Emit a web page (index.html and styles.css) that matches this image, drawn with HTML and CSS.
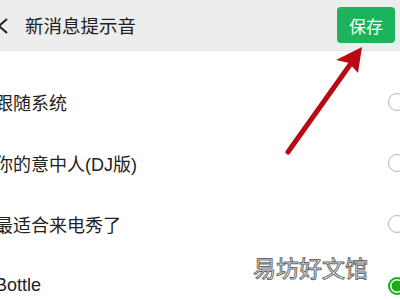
FILE: index.html
```html
<!DOCTYPE html>
<html lang="zh">
<head>
<meta charset="utf-8">
<link rel="stylesheet" href="styles.css">
</head>
<body>
<div class="page">
  <header class="bar">
    <svg class="back" width="12" height="16" viewBox="0 0 12 16"><path d="M10 1 L2 8 L10 15" fill="none" stroke="#222" stroke-width="2"/></svg>
    <span class="title">新消息提示音</span>
    <button class="save">保存</button>
  </header>
  <ul class="list">
    <li class="row"><span class="name">跟随系统</span><span class="radio"></span></li>
    <li class="row"><span class="name">你的意中人(DJ版)</span><span class="radio"></span></li>
    <li class="row"><span class="name">最适合来电秀了</span><span class="radio"></span></li>
    <li class="row"><span class="name">Bottle</span><span class="radio on"></span></li>
  </ul>
  <svg class="arrow" width="400" height="300" viewBox="0 0 400 300">
    <line x1="288" y1="152" x2="352" y2="62" stroke="#b70a12" stroke-width="5" stroke-linecap="round"/>
    <polygon points="362,47 336,60 349,63 358,73" fill="#b70a12"/>
  </svg>
  <div class="mark">易坊好文馆</div>
</div>
</body>
</html>
```
FILE: styles.css
```css
* { box-sizing: border-box; }
html, body { margin: 0; padding: 0; background: #fff; }
.page {
  position: relative;
  width: 400px;
  height: 300px;
  overflow: hidden;
  font-family: "Liberation Sans", "Noto Sans CJK SC", sans-serif;
  color: #222;
}
.bar {
  display: flex;
  align-items: center;
  height: 51px;
  background: #ededed;
  border-bottom: 1px solid #e3e3e3;
}
.back { margin-left: -3px; margin-top: 2px; }
.title {
  margin-left: 16px;
  font-size: 18.5px;
  color: #222;
}
.save {
  margin-left: auto;
  margin-right: 5px;
  width: 58px;
  height: 36px;
  border: none;
  border-radius: 4px;
  background: #1bb35b;
  color: #fff;
  font-family: "Liberation Sans", "Noto Sans CJK SC", sans-serif;
  font-size: 17px;
  padding: 0;
}
.list {
  list-style: none;
  margin: 0;
  padding: 20px 0 0;
}
.row {
  display: flex;
  align-items: center;
  justify-content: space-between;
  height: 61.3px;
}
.name {
  margin-left: -5px;
  font-size: 18px;
  color: #222;
}
.radio {
  width: 18px;
  height: 18px;
  margin-right: -6px;
  border-radius: 50%;
  border: 1.5px solid #b4b4b4;
}
.radio.on {
  border: 2px solid #1aad19;
  background: radial-gradient(circle, #1aad19 0 5px, #e8f7e8 5.8px);
}
.arrow {
  position: absolute;
  left: 0;
  top: 0;
}
.mark {
  position: absolute;
  left: 253px;
  top: 250px;
  font-family: "Noto Sans CJK SC", sans-serif;
  font-size: 23px;
  color: #fff;
  -webkit-text-stroke: 1px #6a6a6a;
  letter-spacing: 0px;
}
```
